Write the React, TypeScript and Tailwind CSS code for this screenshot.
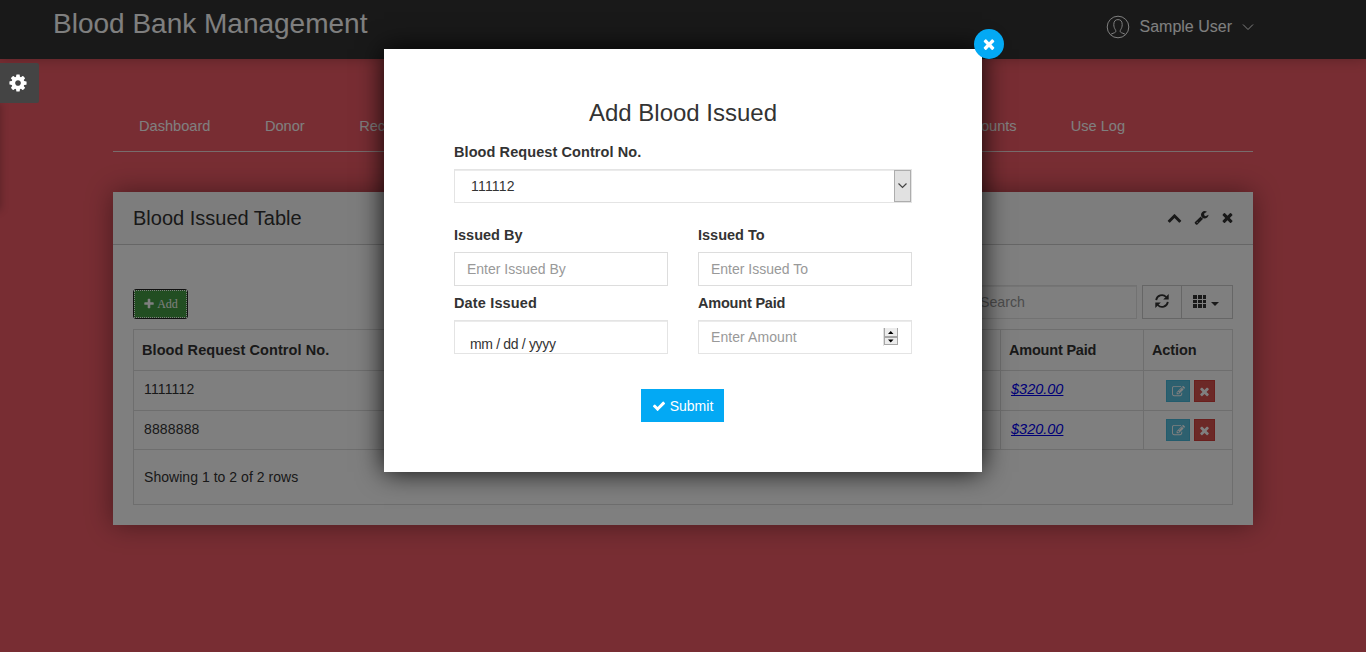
import React from "react";

const FA = {
  times:
    "M1490 1322q0 40-28 68l-136 136q-28 28-68 28t-68-28l-294-294-294 294q-28 28-68 28t-68-28l-136-136q-28-28-28-68t28-68l294-294-294-294q-28-28-28-68t28-68l136-136q28-28 68-28t68 28l294 294 294-294q28-28 68-28t68 28l136 136q28 28 28 68t-28 68l-294 294 294 294q28 28 28 68z",
  cog: "M1152 896q0-106-75-181t-181-75-181 75-75 181 75 181 181 75 181-75 75-181zm512-109v222q0 12-8 23t-20 13l-185 28q-19 54-39 91 35 50 107 138 10 12 10 25t-9 23q-27 37-99 108t-94 71q-12 0-26-9l-138-108q-44 23-91 38-16 136-29 186-7 28-36 28h-222q-14 0-24.5-8.5t-11.5-21.5l-28-184q-49-16-90-37l-141 107q-10 9-25 9-14 0-25-11-126-114-165-168-7-10-7-23 0-12 8-23 15-21 51-66.5t54-70.5q-27-50-41-99l-183-27q-13-2-21-12.5t-8-23.5v-222q0-12 8-23t19-13l186-28q14-46 39-92-40-57-107-138-10-12-10-24 0-10 9-23 26-36 98.5-107.5t94.5-71.5q13 0 26 10l138 107q44-23 91-38 16-136 29-186 7-28 36-28h222q14 0 24.5 8.5t11.5 21.5l28 184q49 16 90 37l142-107q9-9 24-9 13 0 25 10 129 119 165 170 7 8 7 22 0 12-8 23-15 21-51 66.5t-54 70.5q26 50 41 98l183 28q13 2 21 12.5t8 23.5z",
  check:
    "M1671 566q0 40-28 68l-724 724-136 136q-28 28-68 28t-68-28l-136-136-362-362q-28-28-28-68t28-68l136-136q28-28 68-28t68 28l294 295 656-657q28-28 68-28t68 28l136 136q28 28 28 68z",
  plus: "M1600 736v192q0 40-28 68t-68 28h-416v416q0 40-28 68t-68 28h-192q-40 0-68-28t-28-68v-416h-416q-40 0-68-28t-28-68v-192q0-40 28-68t68-28h416v-416q0-40 28-68t68-28h192q40 0 68 28t28 68v416h416q40 0 68 28t28 68z",
  up: "M1683 1331l-166 165q-19 19-45 19t-45-19l-531-531-531 531q-19 19-45 19t-45-19l-166-165q-19-19-19-45.5t19-45.5l742-741q19-19 45-19t45 19l742 741q19 19 19 45.5t-19 45.5z",
  wrench:
    "M448 1472q0-26-19-45t-45-19-45 19-19 45 19 45 45 19 45-19 19-45zm644-420l-682 682q-37 37-90 37-52 0-91-37l-106-108q-38-36-38-90 0-53 38-91l681-681q39 98 114.5 173.5t173.5 114.5zm634-435q0 39-23 106-47 134-164.5 217.5t-258.5 83.500q-185 0-316.5-131.5t-131.5-316.5 131.5-316.5 316.5-131.5q58 0 121.5 16.5t107.5 46.5q16 11 16 28t-16 28l-293 169v224l193 107q5-3 79-48.5t135.5-81 70.5-35.5q15 0 23.5 10t8.5 25z",
  edit: "M888 1184l116-116-152-152-116 116v56h96v96h56zm440-720q-16-16-33 1l-350 350q-17 17-1 33t33-1l350-350q17-17 1-33zm80 594v190q0 119-84.5 203.5t-203.5 84.5h-832q-119 0-203.5-84.5t-84.5-203.5v-832q0-119 84.5-203.5t203.5-84.5h832q63 0 117 25 15 7 18 23 3 17-9 29l-49 49q-14 14-32 8-23-6-45-6h-832q-66 0-113 47t-47 113v832q0 66 47 113t113 47h832q66 0 113-47t47-113v-126q0-13 9-22l64-64q15-15 35-7t20 29zm-96-738l288 288-672 672h-288v-288zm444 132l-92 92-288-288 92-92q28-28 68-28t68 28l152 152q28 28 28 68t-28 68z",
};

function Icon({ d, className = "" }: { d: string; className?: string }) {
  return (
    <svg viewBox="0 0 1792 1792" fill="currentColor" className={`shrink-0 ${className}`}>
      <path d={d} />
    </svg>
  );
}

function Header() {
  return (
    <header className="flex h-[59px] justify-between bg-[#333] pr-[112px] pl-[53px] text-white shadow-[0_0_12px_rgba(0,0,0,0.25)]">
      <h1 className="pt-[6px] text-[28px] leading-9 whitespace-nowrap">Blood Bank Management</h1>
      <div className="flex h-[53px] items-center">
        <svg viewBox="0 0 24 24" fill="none" stroke="currentColor" strokeWidth="1" className="-ml-px size-6">
          <circle cx="12" cy="12" r="10.800" />
          <path d="M4.600 19.600c1-1.200 4-1.500 4.900-2.500.6-.7.3-1.700-.2-2.500-.8-1.300-1.500-2.800-1.500-5C7.800 6 9.500 4.600 12 4.600s4.200 1.400 4.200 5c0 2.200-.7 3.700-1.500 5-.5.8-.8 1.800-.2 2.500.9 1 3.900 1.300 4.900 2.500" />
        </svg>
        <span className="ml-[10px] text-base">Sample User</span>
        <svg viewBox="0 0 12 8" fill="none" stroke="currentColor" strokeWidth="1" className="ml-[10px] h-2 w-3">
          <path d="M1 1.500l5 5 5-5" />
        </svg>
      </div>
    </header>
  );
}

function Nav() {
  return (
    <nav className="mx-[113px] mt-[41px] flex h-[52px] items-start border-b border-[#f0d8d8] pt-[15px] pl-[26px] text-[14.600px] leading-[22px] text-white">
      <a>Dashboard</a>
      <a className="ml-[54.500px]">Donor</a>
      <a className="ml-[54.500px]">Recipient</a>
      <a className="mr-[54px] ml-auto">Accounts</a>
      <a className="mr-[128px]">Use Log</a>
    </nav>
  );
}

const rows = [
  { no: "1111112", amount: "$320.00", row: "h-10", text: "pb-[3px]", actions: "pt-px" },
  { no: "8888888", amount: "$320.00", row: "h-[39px]", text: "pb-[2px]", actions: "" },
];

function IssuedTable() {
  return (
    <section className="mx-[113px] mt-10 h-[333px] bg-white text-sm text-[#333] shadow-[0_0_25px_rgba(0,0,0,0.4)]">
      <div className="flex h-[53px] items-center justify-between border-b border-[#ccc] bg-[#fbfbfb] pr-[18px] pl-5">
        <h2 className="text-xl">Blood Issued Table</h2>
        <div className="flex items-center gap-3 pb-[2px]">
          <Icon d={FA.up} className="size-[15px]" />
          <Icon d={FA.wrench} className="size-[15px]" />
          <Icon d={FA.times} className="-ml-px size-[15px]" />
        </div>
      </div>
      <div className="flex h-[84px] items-start justify-between px-5 pt-10">
        <button className="mt-[4px] flex h-[30px] w-[55px] items-center justify-center rounded-[3px] border border-[#222] bg-[#449d44]">
          <span className="flex h-full w-full items-center justify-center border border-dotted border-white font-['Liberation_Serif',serif] text-xs text-white">
            <Icon d={FA.plus} className="mr-[2px] size-3" />
            Add
          </span>
        </button>
        <div className="flex">
          <div className="flex h-[34px] w-[170px] items-center border border-[#e4e4e4] pl-3 text-[14.200px] text-[#999] shadow-[inset_0_1px_0_#ebebeb]">Search</div>
          <div className="ml-[5px] flex h-[34px] w-[91px] border border-[#ccc]">
            <div className="flex w-[39px] items-center justify-center border-r border-[#ccc] pb-[2px]">
              <svg viewBox="0 0 14 14" className="size-[14px]">
                <path d="M1.200 6.200A5.800 5.800 0 0 1 11.200 3M12.800 7.800A5.800 5.800 0 0 1 2.800 11" fill="none" stroke="currentColor" strokeWidth="1.800" />
                <path d="M13.700 0v5.500H8.200zM.3 14V8.500H5.800z" fill="currentColor" />
              </svg>
            </div>
            <div className="flex flex-1 items-center justify-center pr-[2px]">
              <svg viewBox="0 0 14 14" fill="currentColor" className="size-[14px]">
                <path d="M0 0h4v4H0zM5 0h4v4H5zM10 0h3v4h-3zM0 5h4v3H0zM5 5h4v3H5zM10 5h3v3h-3zM0 9h4v4H0zM5 9h4v4H5zM10 9h3v4h-3z" />
              </svg>
              <svg viewBox="0 0 8 4" fill="currentColor" className="mt-[3px] ml-[4px] h-1 w-2">
                <path d="M0 0h8L4 4z" />
              </svg>
            </div>
          </div>
        </div>
      </div>
      <div className="mx-5 h-[176px] border border-[#ddd]">
        <div className="flex h-[41px] border-b border-[#ddd] text-[14.500px] font-bold">
          <div className="flex flex-1 items-center border-r border-[#ddd] pl-2 tracking-[0.080px]">Blood Request Control No.</div>
          <div className="flex w-[143px] items-center border-r border-[#ddd] pl-2 tracking-[-0.200px]">Amount Paid</div>
          <div className="flex w-[88px] items-center pl-2 tracking-[-0.100px]">Action</div>
        </div>
        {rows.map((r) => (
          <div key={r.no} className={`flex border-b border-[#ddd] ${r.row}`}>
            <div className={`flex flex-1 items-center border-r border-[#ddd] pl-[10px] tracking-[0.150px] ${r.text}`}>{r.no}</div>
            <div className={`flex w-[143px] items-center border-r border-[#ddd] pl-[10px] ${r.text}`}>
              <a className="text-[14.500px] text-[#0000ee] italic underline">{r.amount}</a>
            </div>
            <div className={`flex w-[88px] items-center gap-1 pl-[22px] text-white ${r.actions}`}>
              <span className="flex h-[22px] w-6 items-center justify-center border border-[#46b8da] bg-[#5bc0de]">
                <Icon d={FA.edit} className="size-[13px]" />
              </span>
              <span className="flex h-[22px] w-[21px] items-center justify-center border border-[#d43f3a] bg-[#d9534f]">
                <Icon d={FA.times} className="size-[13px]" />
              </span>
            </div>
          </div>
        ))}
        <div className="pt-[17px] pl-[10px] tracking-[0.040px]">Showing 1 to 2 of 2 rows</div>
      </div>
    </section>
  );
}

function Field({ label, labelClass = "", children }: { label: string; labelClass?: string; children: React.ReactNode }) {
  return (
    <div className="w-[214px]">
      <div className={`h-[27px] text-[14.500px] leading-5 font-bold ${labelClass}`}>{label}</div>
      {children}
    </div>
  );
}

function Modal() {
  return (
    <div className="relative h-[423px] w-[598px] bg-white px-[70px] pt-[47px] text-sm text-[#333] shadow-[0_0_25px_rgba(0,0,0,0.9)]">
      <button className="absolute -top-5 -right-[22px] flex size-[30px] items-center justify-center rounded-full bg-[#03a9f4] text-white">
        <Icon d={FA.times} className="size-4" />
      </button>
      <h2 className="text-center text-2xl leading-[34px]">Add Blood Issued</h2>
      <div className="mt-[12px] h-[27px] text-[14.500px] leading-5 font-bold tracking-[0.080px]">Blood Request Control No.</div>
      <div className="flex h-[34px] items-center justify-between border border-[#e4e4e4] pl-4 shadow-[inset_0_1px_0_#ebebeb]">
        <span className="tracking-[0.200px]">111112</span>
        <span className="flex h-8 w-[17px] items-center justify-center border border-[#adadad] bg-[#e1e1e1] pr-px">
          <svg viewBox="0 0 9 6" fill="none" stroke="#444" strokeWidth="1.200" className="h-1.5 w-[9px]">
            <path d="M.5.5l4 4 4-4" />
          </svg>
        </span>
      </div>
      <div className="mt-[22px] grid grid-cols-2 gap-x-[30px] gap-y-[7px]">
        <Field label="Issued By">
          <div className="flex h-[34px] items-center border border-[#ddd] pl-3 text-[#999]">Enter Issued By</div>
        </Field>
        <Field label="Issued To">
          <div className="flex h-[34px] items-center border border-[#ddd] pl-3 text-[#999]">Enter Issued To</div>
        </Field>
        <Field label="Date Issued" labelClass="tracking-[0.150px]">
          <div className="h-[34px] overflow-hidden border border-[#e4e4e4] pt-[13px] pl-[15px] leading-5 tracking-[-0.330px] shadow-[inset_0_1px_0_#ebebeb]">
            mm / dd / yyyy
          </div>
        </Field>
        <Field label="Amount Paid" labelClass="tracking-[-0.200px]">
          <div className="flex h-[34px] items-center justify-between border border-[#e4e4e4] pr-[12px] pl-3 text-[#999] shadow-[inset_0_1px_0_#ebebeb]">
            <span className="tracking-[0.080px]">Enter Amount</span>
            <svg viewBox="0 0 16 18" className="h-[18px] w-4">
              <path d="M0 0h1v18H0z" fill="#e0e0e0" />
              <path d="M1 0h14v17H1z" fill="#a6a6a6" />
              <path d="M2 0h12v8H2zM2 10h12v6H2z" fill="#ececec" />
              <path d="M5 6h5.500L7.750 3zM5 11.500h5.500L7.750 14.500z" fill="#000" />
            </svg>
          </div>
        </Field>
      </div>
      <div className="mt-[35px] flex justify-center pr-px">
        <button className="flex h-[33px] w-[83px] items-center justify-center bg-[#03a9f4] text-white">
          <Icon d={FA.check} className="mr-[4px] size-[14px]" />
          Submit
        </button>
      </div>
    </div>
  );
}

export default function App() {
  return (
    <div className="relative h-[652px] w-[1366px] overflow-hidden bg-[#f05b66] font-['Liberation_Sans',Arial,sans-serif]">
      <Header />
      <Nav />
      <IssuedTable />
      <div className="absolute inset-0 flex items-start justify-center bg-black/50 pt-[49px]">
        <Modal />
      </div>
      <div className="absolute top-[103px] -left-2 h-[107px] w-2 shadow-[0_0_8px_rgba(0,0,0,0.3)]" />
      <button className="absolute top-[63px] left-0 flex h-10 w-[39px] items-center justify-center rounded-r-[2px] bg-[#444] text-white">
        <Icon d={FA.cog} className="mr-[3px] size-5" />
      </button>
    </div>
  );
}
